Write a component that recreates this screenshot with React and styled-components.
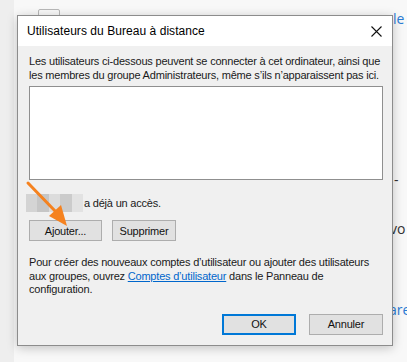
import React from "react";
import styled, { createGlobalStyle } from "styled-components";

const Global = createGlobalStyle`
  html, body {
    margin: 0;
    padding: 0;
    background: #f8f8f8;
    font-family: "Liberation Sans", Arial, sans-serif;
  }
`;

const Page = styled.div`
  position: relative;
  width: 407px;
  height: 362px;
  overflow: hidden;
  display: flex;
`;

const SideStrip = styled.div`
  width: 14px;
  background: #eeeeee;
`;

const PageBody = styled.div`
  flex: 1;
  position: relative;
`;

const Peek = styled.div`
  position: absolute;
  left: ${(p) => p.x}px;
  top: ${(p) => p.y}px;
  font-size: 14px;
  font-family: "Open Sans", sans-serif;
  color: ${(p) => (p.link ? "#2a7bd4" : "#333")};
`;

const GhostBox = styled.div`
  position: absolute;
  left: 24px;
  top: 9px;
  width: 20px;
  height: 12px;
  border: 1px solid #b8b8b8;
  border-radius: 2px;
`;

const Dialog = styled.div`
  position: absolute;
  left: 17px;
  top: 15px;
  width: 374px;
  height: 329px;
  border: 1px solid #8c8c8c;
  background: #f0f0f0;
  box-shadow: 0 2px 10px rgba(0, 0, 0, 0.22);
  display: flex;
  flex-direction: column;
  font-size: 11px;
  letter-spacing: -0.2px;
  color: #1a1a1a;
`;

const TitleBar = styled.div`
  height: 30px;
  background: #fff;
  display: flex;
  align-items: center;
  justify-content: space-between;
  padding: 0 10px 0 9px;
  font-size: 12px;
  letter-spacing: 0.05px;
  color: #000;
`;

const Close = styled.svg`
  width: 11px;
  height: 11px;
`;

const Content = styled.div`
  flex: 1;
  display: flex;
  flex-direction: column;
  padding: 9px 9px 0 11px;
`;

const Text = styled.div`
  line-height: 13.5px;
  white-space: nowrap;
  margin-bottom: ${(p) => p.mb || 0}px;
`;

const ListBox = styled.div`
  height: 92px;
  background: #fff;
  border: 1px solid #8f8f8f;
  margin-bottom: 14px;
`;

const AccessRow = styled.div`
  display: flex;
  align-items: center;
  height: 18px;
  margin-left: -3px;
  margin-bottom: 8px;
`;

const Blur = styled.div`
  display: flex;
  width: 57px;
  height: 18px;
  margin-right: 1px;
`;

const Cell = styled.div`
  flex: 1;
  background: ${(p) => p.c};
`;

const Row = styled.div`
  display: flex;
  gap: ${(p) => p.gap}px;
  justify-content: ${(p) => p.justify || "flex-start"};
  margin-bottom: ${(p) => p.mb || 0}px;
`;

const Button = styled.div`
  box-sizing: border-box;
  width: ${(p) => p.w}px;
  height: ${(p) => p.h || 21}px;
  display: flex;
  align-items: center;
  justify-content: center;
  background: #e1e1e1;
  border: 1px solid ${(p) => (p.primary ? "#0078d7" : "#adadad")};
  box-shadow: ${(p) => (p.primary ? "inset 0 0 0 1px #0078d7" : "none")};
  color: #111;
`;

const Link = styled.span`
  color: #0066cc;
  text-decoration: underline;
`;

const Arrow = styled.svg`
  position: absolute;
  left: 0;
  top: 0;
  pointer-events: none;
`;

export default function App() {
  return (
    <>
      <Global />
      <Page>
        <SideStrip />
        <PageBody>
          <GhostBox />
          <Peek x={379} y={9} link>le</Peek>
          <Peek x={380} y={170}>-</Peek>
          <Peek x={376} y={219}>vo</Peek>
          <Peek x={375} y={300} link>are</Peek>
        </PageBody>
        <Dialog>
          <TitleBar>
            <span>Utilisateurs du Bureau à distance</span>
            <Close viewBox="0 0 11 11">
              <path d="M0.5 0.5 L10.5 10.5 M10.5 0.5 L0.5 10.5" stroke="#111" strokeWidth="1.1" />
            </Close>
          </TitleBar>
          <Content>
            <Text mb={4}>
              Les utilisateurs ci-dessous peuvent se connecter à cet ordinateur, ainsi que
              <br />
              les membres du groupe Administrateurs, même s’ils n’apparaissent pas ici.
            </Text>
            <ListBox />
            <AccessRow>
              <Blur>
                <Cell c="#d4d4d4" />
                <Cell c="#c6c6c6" />
                <Cell c="#dcdcdc" />
                <Cell c="#cbcbcb" />
                <Cell c="#e2e2e2" />
              </Blur>
              <span>a déjà un accès.</span>
            </AccessRow>
            <Row gap={10} mb={15}>
              <Button w={73}>Ajouter...</Button>
              <Button w={64}>Supprimer</Button>
            </Row>
            <Text mb={17}>
              Pour créer des nouveaux comptes d’utilisateur ou ajouter des utilisateurs
              <br />
              aux groupes, ouvrez <Link>Comptes d’utilisateur</Link> dans le Panneau de
              <br />
              configuration.
            </Text>
            <Row gap={13} justify="flex-end">
              <Button w={74} primary>OK</Button>
              <Button w={74}>Annuler</Button>
            </Row>
          </Content>
        </Dialog>
        <Arrow width="407" height="362">
          <line x1="28" y1="183" x2="57" y2="213" stroke="#f5821f" strokeWidth="3" strokeLinecap="round" />
          <polygon points="67,226 49,216 61,205" fill="#f5821f" />
        </Arrow>
      </Page>
    </>
  );
}
